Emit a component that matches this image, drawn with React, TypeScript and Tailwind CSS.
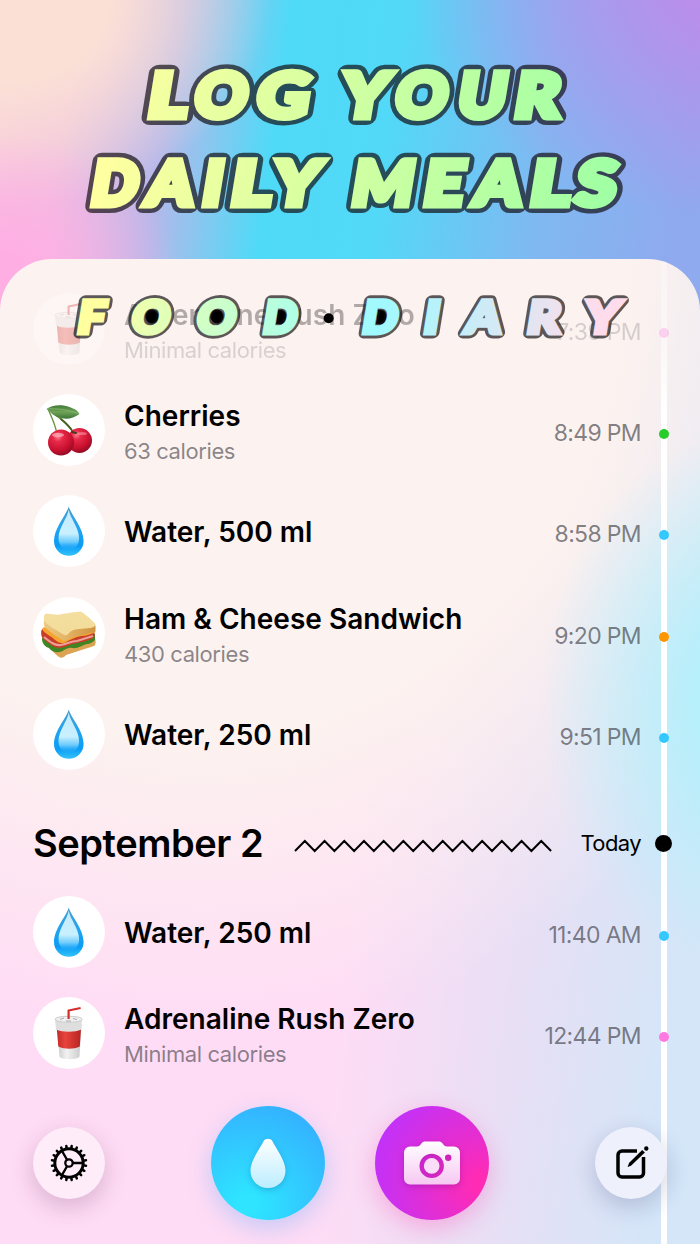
import type { ReactNode } from "react";

type Icon = "cup" | "cherries" | "drop" | "sandwich";

interface Entry {
  id: number;
  icon: Icon;
  name: string;
  note?: string;
  time: string;
  dot: string;
  faded?: boolean;
}

// [letter, left edge, right edge] on the baseline, before the slant
type Glyph = [string, number, number];

const yesterday: Entry[] = [
  { id: 1, icon: "cup", name: "Adrenaline Rush Zero", note: "Minimal calories", time: "7:39 PM", dot: "bg-[#ff78e2]", faded: true },
  { id: 2, icon: "cherries", name: "Cherries", note: "63 calories", time: "8:49 PM", dot: "bg-[#28cd2c]" },
  { id: 3, icon: "drop", name: "Water, 500 ml", time: "8:58 PM", dot: "bg-[#34c8ff]" },
  { id: 4, icon: "sandwich", name: "Ham & Cheese Sandwich", note: "430 calories", time: "9:20 PM", dot: "bg-[#ff9500]" },
  { id: 5, icon: "drop", name: "Water, 250 ml", time: "9:51 PM", dot: "bg-[#34c8ff]" },
];

const today: Entry[] = [
  { id: 6, icon: "drop", name: "Water, 250 ml", time: "11:40 AM", dot: "bg-[#34c8ff]" },
  { id: 7, icon: "cup", name: "Adrenaline Rush Zero", note: "Minimal calories", time: "12:44 PM", dot: "bg-[#ff78e2]" },
];

const lineOne: Glyph[] = [
  ["L", 146, 186], ["O", 190.3, 245], ["G", 252.5, 306], [" ", 310, 330],
  ["Y", 336, 387.4], ["O", 391, 445], ["U", 455, 502.5], ["R", 512.7, 559.5],
];

const lineTwo: Glyph[] = [
  ["D", 89, 136], ["A", 141, 192.7], ["I", 200.7, 218], ["L", 229, 270], ["Y", 267.7, 319], [" ", 322, 342],
  ["M", 350, 409.4], ["E", 421.7, 461.4], ["A", 469, 521], ["L", 528.3, 569], ["S", 571, 614.5],
];

const diary: Glyph[] = [
  ["F", 76, 104], ["O", 128.7, 168], ["O", 194, 234], ["D", 261.7, 295.3],
  ["D", 361, 396], ["I", 422.7, 436], ["A", 461.7, 500.7], ["R", 525.7, 560], ["Y", 580.6, 619],
];

// side bearings in em: [left, right]
const bearings: Record<string, [number, number]> = {
  L: [0.07, 0.02], O: [0.035, 0.035], G: [0.035, 0.05], Y: [0.003, 0.003], U: [0.06, 0.06],
  R: [0.07, 0.005], D: [0.07, 0.035], A: [0.005, 0.005], I: [0.075, 0.075], M: [0.07, 0.07],
  E: [0.07, 0.035], S: [0.025, 0.025], F: [0.07, 0.025], " ": [0, 0],
};

interface LetteringProps {
  glyphs: Glyph[];
  baseline: number;
  size: number;
  outline: number;
  bold: number;
  fill: string;
}

// `bold` thickens the letters themselves, `outline` is the dark rim around them
function Lettering({ glyphs, baseline, size, outline, bold, fill }: LetteringProps) {
  const spans = glyphs.map(([ch, left, right], i) => {
    const [l, r] = bearings[ch];
    return (
      <tspan key={i} x={left + bold / 2 - l * size} textLength={right - left - bold + (l + r) * size} lengthAdjust="spacingAndGlyphs">
        {ch}
      </tspan>
    );
  });
  return (
    <g transform={`translate(0 ${baseline}) skewX(-9.3) translate(0 ${-bold / 2})`} fontFamily="Lato, sans-serif" fontWeight="900" fontSize={size} xmlSpace="preserve">
      <text aria-hidden="true" opacity="0.68" fill="#100c10" stroke="#100c10" strokeWidth={bold + outline * 2} strokeLinejoin="round">{spans}</text>
      <text fill={fill} stroke={fill} strokeWidth={bold}>{spans}</text>
    </g>
  );
}

function Headline() {
  return (
    <svg viewBox="0 0 700 259" className="block h-[259px] w-full" role="img" aria-label="Log your daily meals">
      <defs>
        <linearGradient id="lime" gradientUnits="userSpaceOnUse" x1="100" y1="0" x2="600" y2="60">
          <stop offset="0" stopColor="#fdffa0" />
          <stop offset="1" stopColor="#a0ffa4" />
        </linearGradient>
      </defs>
      <Lettering glyphs={lineOne} baseline={120} size={61} bold={7} outline={4.6} fill="url(#lime)" />
      <Lettering glyphs={lineTwo} baseline={208} size={61} bold={7} outline={4.6} fill="url(#lime)" />
    </svg>
  );
}

function DiaryTitle() {
  return (
    <svg viewBox="0 0 700 90" className="absolute left-0 top-[21px] h-[90px] w-full" role="img" aria-label="Food diary">
      <defs>
        <linearGradient id="pastel" gradientUnits="userSpaceOnUse" x1="78" y1="0" x2="620" y2="0">
          <stop offset="0.03" stopColor="#ffffa0" />
          <stop offset="0.25" stopColor="#ccffca" />
          <stop offset="0.38" stopColor="#b2ffe4" />
          <stop offset="0.55" stopColor="#a0f9ff" />
          <stop offset="0.95" stopColor="#ffdcec" />
        </linearGradient>
      </defs>
      <ellipse cx="152" cy="36.5" rx="6.500" ry="7" />
      <ellipse cx="217" cy="36.5" rx="6.500" ry="7" />
      <path d="M278 30h4c6 1 6 11 0 14h-6z" />
      <path d="M378 30h4c6 1 6 11 0 14h-6z" />
      <Lettering glyphs={diary} baseline={55} size={44.5} bold={5} outline={2.9} fill="url(#pastel)" />
      <circle cx="328.7" cy="38.3" r="5" />
    </svg>
  );
}

function DropEmoji() {
  return (
    <svg viewBox="0 0 72 72" className="size-[72px]">
      <defs>
        <linearGradient id="dropBody" x1="0" y1="0" x2="0" y2="1">
          <stop offset="0" stopColor="#4a9dcc" />
          <stop offset="0.45" stopColor="#22a4ef" />
          <stop offset="0.8" stopColor="#0a9cf5" />
          <stop offset="1" stopColor="#35c3fb" />
        </linearGradient>
        <linearGradient id="dropGlow" x1="0" y1="0" x2="0" y2="1">
          <stop offset="0" stopColor="#c4ecff" />
          <stop offset="0.6" stopColor="#c8f0ff" />
          <stop offset="0.8" stopColor="#86d7ff" stopOpacity="0.8" />
          <stop offset="1" stopColor="#2fb2fb" stopOpacity="0" />
        </linearGradient>
      </defs>
      <path d="M35.700 11.500C33.400 20 21 33 21 46a14.800 14.800 0 0 0 29.600 0C50.600 33 38.200 20 35.700 11.500Z" fill="url(#dropBody)" />
      <path d="M35.700 14.500C34.500 23 25.500 33 25.500 43c0 8 5 12 10.300 12s10.300-4 10.300-12C46.100 33 37 23 35.700 14.500Z" fill="url(#dropGlow)" />
    </svg>
  );
}

function CherriesEmoji() {
  return (
    <svg viewBox="0 0 72 72" className="size-[72px]">
      <defs>
        <radialGradient id="cherry" cx="0.38" cy="0.28" r="0.75">
          <stop offset="0" stopColor="#ff7b8c" />
          <stop offset="0.25" stopColor="#e62a4a" />
          <stop offset="0.7" stopColor="#c9102f" />
          <stop offset="1" stopColor="#8f0c24" />
        </radialGradient>
        <linearGradient id="leaf" x1="0" y1="0" x2="0" y2="1">
          <stop offset="0" stopColor="#3f7a35" />
          <stop offset="0.5" stopColor="#6fa457" />
          <stop offset="1" stopColor="#3c7434" />
        </linearGradient>
      </defs>
      <path d="M15 15c3 7 7 14 9 25M16 16c9 7 18 13 24 22" fill="none" stroke="#6c9440" strokeWidth="1.300" />
      <path d="M28 25c5 4 9 8 12 13" fill="none" stroke="#4a5f26" strokeWidth="1.900" strokeLinecap="round" />
      <path d="M13.500 15c5-4 15-5 23-2 5 2 8 3 10 7-7 5-14 6-22 3-5-2-7-5-11-8Z" fill="url(#leaf)" />
      <path d="M14 15c10-1 22 1 32 5" fill="none" stroke="#91b878" strokeWidth="0.700" />
      <circle cx="46.500" cy="46.500" r="12.500" fill="url(#cherry)" />
      <circle cx="28" cy="48.500" r="13" fill="url(#cherry)" />
      <path d="M39 38l4 1" stroke="#4a3a1c" strokeWidth="2" strokeLinecap="round" />
      <ellipse cx="25" cy="41" rx="6" ry="2.200" fill="#ffb3bd" opacity="0.7" />
      <ellipse cx="49" cy="39.500" rx="5" ry="1.600" fill="#ffa6b2" opacity="0.5" />
    </svg>
  );
}

function SandwichEmoji() {
  return (
    <svg viewBox="0 0 72 72" className="size-[72px]">
      <defs>
        <linearGradient id="bread" x1="0" y1="0" x2="0.3" y2="1">
          <stop offset="0" stopColor="#f4dfa0" />
          <stop offset="1" stopColor="#f3dc9a" />
        </linearGradient>
        <linearGradient id="crust" x1="0" y1="0" x2="1" y2="0">
          <stop offset="0" stopColor="#ecca84" />
          <stop offset="0.45" stopColor="#e2b266" />
          <stop offset="1" stopColor="#cf9440" />
        </linearGradient>
      </defs>
      <path d="M13 47c4 5 9 10 13 13 2 1.500 5 .5 7-2l28-9c2-1 2-5 1-8l-48-1Z" fill="#dca352" />
      <path d="M9 42c0 4 3 8 7 9 2 3 7 5 10 4 5 0 7-5 13-4 6 1 10-3 15-4 3 0 6-2 8-4v-6l-50-3Z" fill="#3f8524" />
      <path d="M8.500 33c-1 4 0 8 3 10 4 3 9 8 15 8 7-1 11-4 18-5s13-3 17-6l0-5-50-4Z" fill="#c93e2a" />
      <path d="M11 40c6 5 11 9 17 8s10-4 16-4l16-5" fill="none" stroke="#eba095" strokeWidth="2.200" />
      <path d="M9.500 31c-1 3 6 7 9 9 5 4 8 7 13 6 5-3 11-6 17-7 5 0 10-2 14-4v-2l-45-5Z" fill="#f6a52d" />
      <path d="M11.500 19c-.8 4-1 8 0 11 6 5 13 10 19 14 4 0 6-3 10-4 8-2 15-3 21-5 1.500-2 1.300-5 .5-8l-26-6Z" fill="url(#crust)" />
      <path d="M12 17c6-1 11 2 17 0 7-1 13-2 19-2.500 6 4 10 8 14 12 1 3-2 4-5 4.500-7 1-15 0-20 4-2 2-3 4-6 3-7-5-13-7-19-13-1.500-2-1.500-6 0-8Z" fill="url(#bread)" />
    </svg>
  );
}

function CupEmoji() {
  return (
    <svg viewBox="0 0 72 72" className="size-[72px]">
      <defs>
        <linearGradient id="cupBody" x1="0" y1="0" x2="1" y2="0">
          <stop offset="0" stopColor="#c8c8c8" />
          <stop offset="0.4" stopColor="#f2f2f2" />
          <stop offset="1" stopColor="#c9c9c9" />
        </linearGradient>
        <linearGradient id="cupBand" x1="0" y1="0" x2="1" y2="0">
          <stop offset="0" stopColor="#c12a26" />
          <stop offset="0.35" stopColor="#e8443d" />
          <stop offset="1" stopColor="#b62422" />
        </linearGradient>
      </defs>
      <path d="M24 27h24.500l-2 32.500c-1 3.500-19 3.500-20 0Z" fill="url(#cupBody)" />
      <path d="M23.800 32c7 2.500 17.500 2.500 24.200 0l-1.200 17.500c-6 3-15.500 3-21.500 0Z" fill="url(#cupBand)" />
      <path d="M22 22.500c0-5 27-5 27 0l-.8 10c-6 3-19 3-25.200 0Z" fill="#dedede" />
      <ellipse cx="35.600" cy="22.300" rx="13.700" ry="3" fill="#f0f0f0" stroke="#c6c6c6" strokeWidth="0.800" />
      <path d="M27 22.500l4-1.500M40 21.500l4 1M33 24h5" stroke="#aaa" strokeWidth="1" />
      <path d="M35.600 22v-8.500l12-2.500" fill="none" stroke="#d62b2b" strokeWidth="2.200" strokeLinejoin="round" />
    </svg>
  );
}

const emoji: Record<Icon, ReactNode> = {
  cup: <CupEmoji />,
  cherries: <CherriesEmoji />,
  drop: <DropEmoji />,
  sandwich: <SandwichEmoji />,
};

function Row({ entry }: { entry: Entry }) {
  return (
    <div className={`flex h-[101.3px] items-center pl-[33px] pr-[31px] ${entry.faded ? "opacity-30" : ""}`}>
      <div className="size-[72px] shrink-0 overflow-hidden rounded-full bg-white">{emoji[entry.icon]}</div>
      <div className={`ml-[19px] flex-1 ${entry.note ? "pt-[5px]" : "pt-[2px]"}`}>
        <p className="whitespace-nowrap text-[28px] font-semibold leading-[34px] tracking-[0.02px] text-black">{entry.name}</p>
        {entry.note && <p className="mt-[3px] text-[22px] leading-[30px] tracking-[-0.4px] text-[#3c3c43]/60">{entry.note}</p>}
      </div>
      <p className="pt-[6px] text-[23px] leading-[30px] tracking-[-0.65px] text-[#3c3c43]/65">{entry.time}</p>
      <span className={`ml-[18px] mt-[8px] size-[10px] rounded-full ${entry.dot}`} />
    </div>
  );
}

function Zigzag() {
  const points = Array.from({ length: 27 }, (_, i) => `${1 + i * 9.85},${i % 2 ? 2 : 12}`).join(" ");
  return (
    <svg viewBox="0 0 259 14" className="mt-[7px] h-[14px] w-[259px]">
      <polyline points={points} fill="none" stroke="#000" strokeWidth="2" />
    </svg>
  );
}

function GearIcon() {
  const teeth = Array.from({ length: 20 }, (_, i) => i * 18);
  return (
    <svg viewBox="0 0 40 40" className="size-10" fill="none" stroke="#000">
      <circle cx="20" cy="20" r="14.200" strokeWidth="3" />
      <circle cx="20" cy="20" r="3.700" strokeWidth="2.300" />
      <path d="M23.500 20h11M18.200 17 12.800 7.600M18.200 23l-5.400 9.400" strokeWidth="2.300" />
      {teeth.map((angle) => (
        <path key={angle} d="M20 4.800V2.800" strokeWidth="2.500" strokeLinecap="round" transform={`rotate(${angle + 9} 20 20)`} />
      ))}
    </svg>
  );
}

function ComposeIcon() {
  return (
    <svg viewBox="0 0 40 40" className="size-10" fill="none" stroke="#000">
      <path d="M26 8H11a4 4 0 0 0-4 4v18a4 4 0 0 0 4 4h17.500a4 4 0 0 0 4-4V14" strokeWidth="3.500" />
      <path d="M32.500 8 18 22" stroke="#eef0fb" strokeWidth="6" />
      <path d="M31.200 6.900 33.900 9.600 20.500 22.300 17 24 16.700 23.500 18.200 19.800Z" fill="#000" stroke="none" />
      <circle cx="35.300" cy="5.500" r="2.200" fill="#000" stroke="none" />
    </svg>
  );
}

function CameraIcon() {
  return (
    <svg viewBox="0 0 60 50" className="h-[50px] w-[60px] drop-shadow-[0_2px_3px_rgba(100,0,120,0.3)]">
      <defs>
        <linearGradient id="camera" x1="0" y1="0" x2="0" y2="1">
          <stop offset="0" stopColor="#fff" />
          <stop offset="1" stopColor="#f6c8f2" />
        </linearGradient>
      </defs>
      <path
        fill="url(#camera)"
        fillRule="evenodd"
        d="M8 8.500h7c2 0 3-1 4-2.500 1.500-2 2.500-2.500 4.500-2.500h13c2 0 3 .5 4.500 2.500 1 1.500 2 2.500 4 2.500h7a6 6 0 0 1 6 6v26a6 6 0 0 1-6 6H8a6 6 0 0 1-6-6v-26a6 6 0 0 1 6-6ZM29.700 15.700a12.200 12.200 0 1 0 0 24.400 12.200 12.200 0 1 0 0-24.400ZM46.200 16.500a3.200 3.200 0 1 0 0 6.400 3.200 3.200 0 1 0 0-6.400Z"
      />
      <circle cx="29.700" cy="27.900" r="7.800" fill="#faddf8" />
    </svg>
  );
}

function Toolbar() {
  return (
    <div className="absolute inset-x-0 top-[847px] flex h-[114px] items-center px-[33px]">
      <button className="flex size-[72px] items-center justify-center rounded-full bg-[#feecf9] shadow-[0_8px_24px_rgba(60,0,60,0.2)]">
        <GearIcon />
      </button>
      <button className="ml-[106px] flex size-[114px] items-center justify-center rounded-full bg-[radial-gradient(circle_at_32%_86%,#2ee4ff_8%,#34b0ff_85%)] shadow-[0_8px_24px_rgba(60,160,255,0.3)]">
        <svg viewBox="0 0 40 56" className="h-[56px] w-10 drop-shadow-[0_2px_3px_rgba(0,90,150,0.3)]">
          <defs>
            <linearGradient id="whiteDrop" x1="0" y1="0" x2="0" y2="1">
              <stop offset="0" stopColor="#fff" />
              <stop offset="1" stopColor="#bcedff" />
            </linearGradient>
          </defs>
          <path d="M15.700 6c1.500-3 7.100-3 8.600 0C28 13 37.500 26 37.500 35.500c0 10-7.500 17.500-17.500 17.500S2.500 45.500 2.500 35.500C2.500 26 12 13 15.700 6Z" fill="url(#whiteDrop)" />
        </svg>
      </button>
      <button className="ml-[50px] flex size-[114px] items-center justify-center rounded-full bg-[radial-gradient(circle_at_92%_68%,#ff2bb4_5%,#bc32ff_90%)] shadow-[0_8px_24px_rgba(255,50,170,0.3)]">
        <CameraIcon />
      </button>
      <button className="ml-[106px] flex size-[72px] shrink-0 items-center justify-center rounded-full bg-[#eef0fb] shadow-[0_8px_24px_rgba(20,20,80,0.2)]">
        <ComposeIcon />
      </button>
    </div>
  );
}

export default function App() {
  return (
    <div className="h-[1244px] w-[700px] overflow-hidden bg-[radial-gradient(ellipse_180px_140px_at_0px_275px,#ffaee4_15%,#ffaee400_100%),radial-gradient(ellipse_270px_210px_at_0px_0px,#fbe0d6_40%,#fbe0d600_100%),radial-gradient(ellipse_330px_240px_at_740px_-20px,#bd8ceb_10%,#bd8ceb00_100%),linear-gradient(98deg,#f9c4de_0px,#efbfe0_80px,#b5b8ea_180px,#4fdaf7_290px,#52d9f8_400px,#7fb9f2_560px,#8faaee_700px)] font-['Inter',sans-serif]">
      <Headline />
      <main className="relative h-[985px] overflow-hidden rounded-t-[52px] bg-[radial-gradient(ellipse_220px_270px_at_760px_440px,#b7effb_30%,#b7effb00_100%),radial-gradient(ellipse_690px_775px_at_200px_0px,#fcf2ef_62%,#fcf2ef00_100%),linear-gradient(97deg,#ffdcf5_52%,#e8dff5_74%,#d4e6f8_94%)]">
        <div className="absolute bottom-0 right-[33px] top-0 w-[6.5px] bg-[linear-gradient(to_bottom,rgba(255,255,255,0.3)_0px,rgba(255,255,255,0.5)_90px,#fff_150px)]" />
        <div className="relative pt-[19px]">
          {yesterday.map((entry) => (
            <Row key={entry.id} entry={entry} />
          ))}
          <div className="flex h-[96.5px] items-center pl-[33px] pr-[28px] pt-[20px]">
            <h2 className="w-[261px] whitespace-nowrap text-[38px] font-semibold leading-[46px] tracking-[-0.45px] text-black">September 2</h2>
            <Zigzag />
            <span className="flex-1 pt-[2px] text-right text-[22px] tracking-[-0.6px] text-black">Today</span>
            <span className="ml-[14px] mt-[2px] size-[17px] rounded-full bg-black" />
          </div>
          {today.map((entry) => (
            <Row key={entry.id} entry={entry} />
          ))}
        </div>
        <DiaryTitle />
        <Toolbar />
      </main>
    </div>
  );
}
